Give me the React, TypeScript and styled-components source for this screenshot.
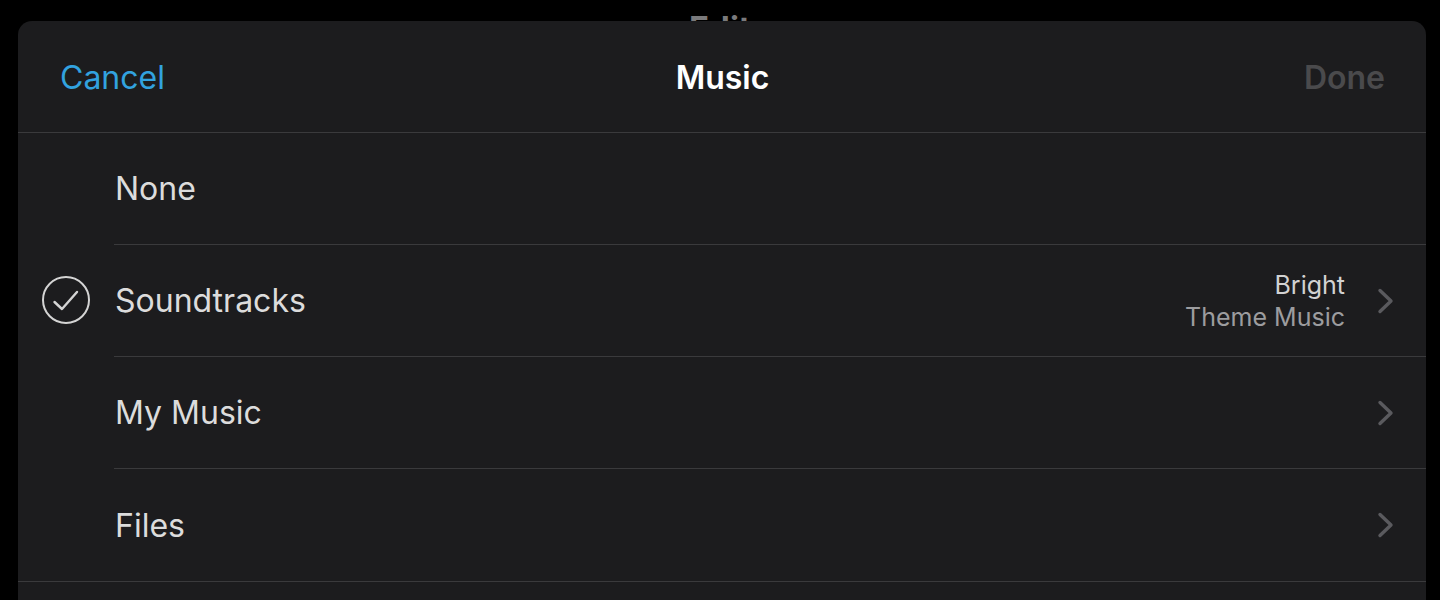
import styled, { createGlobalStyle } from "styled-components"

const GlobalStyle = createGlobalStyle`
    html, body {
        margin: 0;
        padding: 0;
        background: #000;
    }
    body {
        font-family: Inter, "Noto Sans", "Liberation Sans", sans-serif;
        -webkit-font-smoothing: antialiased;
    }
`

const Screen = styled.div`
    position: relative;
    width: 1440px;
    height: 600px;
    overflow: hidden;
    background: #000;
`

const BackdropTitle = styled.div`
    display: flex;
    justify-content: center;
    padding-top: 12px;
    font-size: 33px;
    font-weight: 700;
    color: #7a7a7c;
    line-height: 1;
`

// the modal sheet lies over the page behind it
const Sheet = styled.div`
    position: absolute;
    top: 21px;
    left: 18px;
    right: 14px;
    bottom: -40px;
    background: #1c1c1e;
    border-radius: 14px 14px 0 0;
`

const NavBar = styled.div`
    display: grid;
    grid-template-columns: 1fr auto 1fr;
    align-items: center;
    height: 111px;
    padding: 0 41px 0 42px;
    border-bottom: 1px solid #3a3a3c;
`

const NavButton = styled.span<{ $color: string; $align: "left" | "right" }>`
    font-size: 32px;
    color: ${p => p.$color};
    justify-self: ${p => (p.$align === "left" ? "start" : "end")};
    font-weight: ${p => (p.$align === "right" ? 600 : 400)};
    padding-top: 2px;
`

const NavTitle = styled.span`
    font-size: 32px;
    font-weight: 600;
    color: #fff;
    padding-top: 2px;
`

const List = styled.div`
    display: flex;
    flex-direction: column;
    border-bottom: 1px solid #3a3a3c;
`

const Row = styled.div`
    display: flex;
    align-items: stretch;
    height: 112px;
`

const Leading = styled.div`
    width: 96px;
    flex: none;
    display: flex;
    align-items: center;
    justify-content: center;
    padding-bottom: 2px;
`

const RowBody = styled.div<{ $divider: boolean }>`
    flex: 1;
    display: flex;
    align-items: center;
    padding-right: 31px;
    border-bottom: ${p => (p.$divider ? "1px solid #3a3a3c" : "none")};
`

const Label = styled.span`
    flex: 1;
    font-size: 32px;
    color: #dcdcdc;
    padding-left: 1px;
`

const Detail = styled.div`
    display: flex;
    flex-direction: column;
    align-items: flex-end;
    font-size: 25px;
    line-height: 32px;
    margin-right: 32px;
`

const DetailTop = styled.span`
    color: #d2d2d2;
`

const DetailSub = styled.span`
    color: #9c9c9f;
`

function CheckCircle() {
    return (
        <svg width="50" height="50" viewBox="0 0 50 50">
            <circle cx="25" cy="25" r="23" fill="none" stroke="#d4d4d4" strokeWidth="2" />
            <path d="M13.5 27 L21 34 L36 17" fill="none" stroke="#d4d4d4" strokeWidth="2.4" strokeLinecap="round" strokeLinejoin="round" />
        </svg>
    )
}

function Chevron() {
    return (
        <svg width="18" height="26" viewBox="0 0 18 26">
            <path d="M3 2.5 L14 13 L3 23.5" fill="none" stroke="#5a5a5e" strokeWidth="3.4" strokeLinecap="round" strokeLinejoin="round" />
        </svg>
    )
}

type Item = {
    label: string
    checked?: boolean
    detail?: [string, string]
    chevron?: boolean
}

const items: Item[] = [
    { label: "None" },
    { label: "Soundtracks", checked: true, detail: ["Bright", "Theme Music"], chevron: true },
    { label: "My Music", chevron: true },
    { label: "Files", chevron: true },
]

export default function App() {
    return (
        <Screen>
            <GlobalStyle />
            <BackdropTitle>Edit</BackdropTitle>
            <Sheet>
                <NavBar>
                    <NavButton $color="#32a2df" $align="left">Cancel</NavButton>
                    <NavTitle>Music</NavTitle>
                    <NavButton $color="#4a4a4c" $align="right">Done</NavButton>
                </NavBar>
                <List>
                    {items.map((item, i) => (
                        <Row key={item.label}>
                            <Leading>{item.checked && <CheckCircle />}</Leading>
                            <RowBody $divider={i < items.length - 1}>
                                <Label>{item.label}</Label>
                                {item.detail && (
                                    <Detail>
                                        <DetailTop>{item.detail[0]}</DetailTop>
                                        <DetailSub>{item.detail[1]}</DetailSub>
                                    </Detail>
                                )}
                                {item.chevron && <Chevron />}
                            </RowBody>
                        </Row>
                    ))}
                </List>
            </Sheet>
        </Screen>
    )
}
